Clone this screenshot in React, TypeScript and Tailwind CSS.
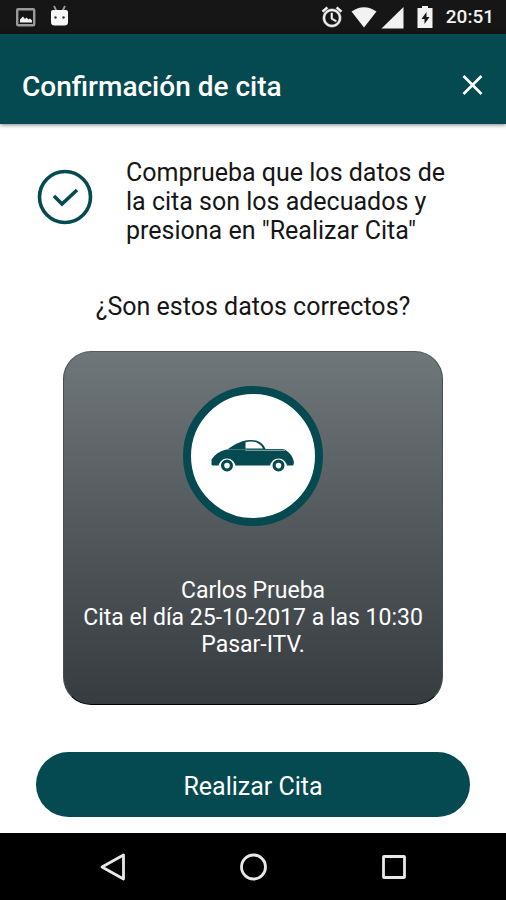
import React from 'react';

function StatusBar() {
  return (
    <div className="flex h-[34px] items-center justify-between bg-[#161616] px-3 text-[#f2f2f2]">
      <div className="flex items-center gap-3 pl-1">
        {/* Captura guardada */}
        <svg className="h-5 w-5" viewBox="0 0 20 20" aria-hidden="true">
          <rect x="1.2" y="2.2" width="17" height="16" rx="1" fill="none" stroke="#9b9b9b" strokeWidth="2.4" />
          <path d="M4 15.500v-3l3-3 2 2.500 1.500-1.500 2 2 1.500-1 2 2v2z" fill="#f2f2f2" />
        </svg>
        {/* Depuración */}
        <svg className="h-6 w-6" viewBox="0 0 24 24" aria-hidden="true">
          <path d="M6 1l2.500 5M17 1l-2.500 5" stroke="#9b9b9b" strokeWidth="1.800" />
          <path d="M3 7q0-2 2-2h13q2 0 2 2v10q0 3.500-3.500 3.500h-10Q3 20.500 3 17z" fill="#f8f8f8" />
          <circle cx="7.500" cy="12.500" r="1.200" fill="#333" />
          <circle cx="15.500" cy="12.500" r="1.200" fill="#333" />
        </svg>
      </div>
      <div className="flex items-center">
        <svg className="mr-[7px] h-6 w-6" viewBox="0 0 24 24" aria-hidden="true">
          <path
            fill="currentColor"
            stroke="currentColor"
            strokeWidth="0.600"
            d="M22 5.720l-4.600-3.860-1.290 1.530 4.600 3.860L22 5.720zM7.880 3.390L6.600 1.860 2 5.710l1.290 1.530 4.590-3.850zM12.500 8H11v6l4.750 2.850.75-1.230-4-2.370V8zM12 4c-4.970 0-9 4.030-9 9s4.020 9 9 9c4.970 0 9-4.030 9-9s-4.030-9-9-9zm0 16c-3.870 0-7-3.130-7-7s3.130-7 7-7 7 3.130 7 7-3.130 7-7 7z"
          />
        </svg>
        <svg className="mr-1 h-6 w-[26px]" viewBox="0 0 26 24" aria-hidden="true">
          <path d="M0.500 6.500Q13-2 25.500 6.500L13 22.500z" fill="currentColor" />
        </svg>
        <svg className="mr-3 h-6 w-[23px]" viewBox="0 0 23 24" aria-hidden="true">
          <path d="M22.500 2V23.500H0.500z" fill="currentColor" />
        </svg>
        <svg className="mr-3 h-6 w-[18px]" viewBox="0 0 18 24" aria-hidden="true">
          <path d="M6 1h6v2h4.500v20h-15V3H6z" fill="currentColor" />
          <path d="M10.500 7l-5 7h3v5l5-7h-3z" fill="#161616" />
        </svg>
        <span className="text-[19px] font-medium leading-6">20:51</span>
      </div>
    </div>
  );
}

function CarIcon() {
  return (
    <svg className="h-[34px] w-[84px]" viewBox="0 0 84 34" aria-hidden="true">
      {/* Techo y ventanilla */}
      <path d="M17 10C25 4.500 31 1.500 39 1c8-.300 13 2.500 15.500 9z" fill="#054a51" />
      <path d="M34.500 9.500V3.200c6.500-1.700 14-.700 17.500 6.300z" fill="#fff" />
      {/* Carrocería */}
      <path
        d="M0.500 26v-5.500C5 14 11 11 18 10.300h16.500l2-.300H72c5.500 2 9.500 6.500 10.500 11.500.700 2 .500 3.500-.500 5H2z"
        fill="#054a51"
      />
      <path d="M34.500 11.300H74" stroke="#fff" strokeWidth="0.600" />
      {/* Ruedas */}
      <path d="M7.500 28a8.500 8.500 0 0 1 17 0z" fill="#fff" />
      <path d="M59 28a8.500 8.500 0 0 1 17 0z" fill="#fff" />
      <circle cx="16" cy="26.600" r="4.400" fill="#fff" stroke="#054a51" strokeWidth="3.200" />
      <circle cx="67.500" cy="26.600" r="4.400" fill="#fff" stroke="#054a51" strokeWidth="3.200" />
    </svg>
  );
}

export default function App() {
  return (
    <div className="flex min-h-screen flex-col bg-white font-[Roboto,sans-serif] text-[#161616]">
      <StatusBar />

      {/* Cabecera */}
      <header className="flex h-[90px] items-center justify-between bg-[#054a51] pt-3 pr-5 pl-[22px] text-white shadow-[0_1px_4px_rgba(0,0,0,0.5)]">
        <h1 className="pt-1 text-[28px] font-medium leading-8">Confirmación de cita</h1>
        <button type="button" aria-label="Cerrar" className="flex h-7 w-7 items-center justify-center">
          <svg className="h-6 w-6" viewBox="0 0 24 24" aria-hidden="true">
            <path d="M3.500 3l18 18M21.500 3l-18 18" stroke="currentColor" strokeWidth="2.600" />
          </svg>
        </button>
      </header>

      <main className="flex flex-1 flex-col px-9 pt-[34px]">
        {/* Aviso */}
        <div className="flex items-start gap-8">
          <svg className="mt-[10px] h-[58px] w-[58px] shrink-0" viewBox="0 0 58 58" aria-hidden="true">
            <circle cx="29" cy="29" r="25.500" fill="none" stroke="#054a51" strokeWidth="3.600" />
            <path d="M18 28l8 8 15-14" fill="none" stroke="#054a51" strokeWidth="3.600" />
          </svg>
          <p className="text-[25px] leading-[29px]">
            Comprueba que los datos de la cita son los adecuados y presiona en "Realizar Cita"
          </p>
        </div>

        <h2 className="mt-[47px] text-center text-[25px] leading-[30px]">¿Son estos datos correctos?</h2>

        {/* Datos de la cita */}
        <section className="mx-[27px] mt-[29px] flex flex-col items-center rounded-[28px] border border-t-[#555b5e] border-x-[#464f52] border-b-black bg-linear-to-b from-[#70777a] to-[#363c40] pt-[34px] pb-[46px] text-white">
          <div className="flex h-[140px] w-[140px] items-center justify-center rounded-full border-8 border-[#054a51] bg-white">
            <CarIcon />
          </div>
          <p className="mt-[51px] text-center text-[23px] leading-[27px]">
            Carlos Prueba
            <br />
            Cita el día 25-10-2017 a las 10:30
            <br />
            Pasar-ITV.
          </p>
        </section>

        <button
          type="button"
          className="mt-[47px] mb-4 h-[65px] rounded-full bg-[#054a51] pt-1 text-[25px] leading-[30px] text-white"
        >
          Realizar Cita
        </button>
      </main>

      {/* Barra de navegación */}
      <nav className="flex h-[67px] items-center justify-center gap-28 bg-black text-[#e8e8e8]">
        <button type="button" aria-label="Atrás">
          <svg className="h-7 w-7" viewBox="0 0 28 28" aria-hidden="true">
            <path d="M3 14L24.500 2v24z" fill="none" stroke="currentColor" strokeWidth="2.800" strokeLinejoin="round" />
          </svg>
        </button>
        <button type="button" aria-label="Inicio">
          <svg className="h-7 w-7" viewBox="0 0 28 28" aria-hidden="true">
            <circle cx="14.500" cy="14" r="12" fill="none" stroke="currentColor" strokeWidth="2.800" />
          </svg>
        </button>
        <button type="button" aria-label="Recientes">
          <svg className="h-7 w-7" viewBox="0 0 28 28" aria-hidden="true">
            <rect x="4.500" y="3.500" width="21" height="21" rx="0.500" fill="none" stroke="currentColor" strokeWidth="2.800" />
          </svg>
        </button>
      </nav>
    </div>
  );
}
